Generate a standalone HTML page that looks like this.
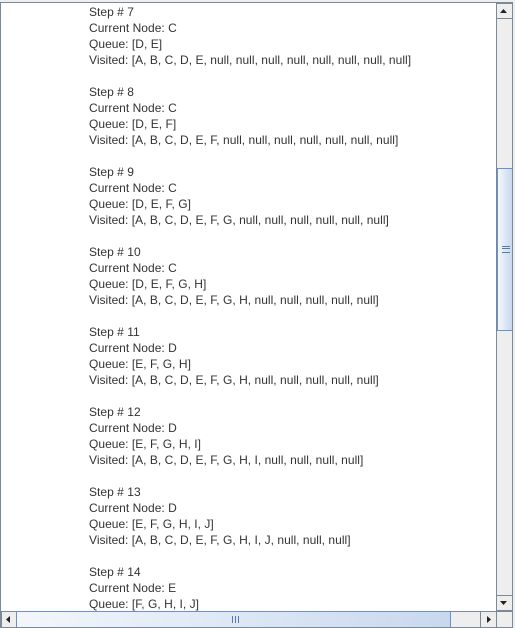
<html><head><style>
body{margin:0;width:515px;height:628px;background:#eeeeee;position:relative;overflow:hidden;font-family:"Liberation Sans",sans-serif}
#box{position:absolute;left:0;top:2px;width:511px;height:624px;border:1px solid #7a8a99;background:#fff;overflow:hidden}
#txt{position:absolute;left:88px;top:1px;font-size:12px;line-height:16px;color:#333;white-space:pre;letter-spacing:0.03px}
.vs{position:absolute;left:495px;top:0;width:16px;height:608px;background:#eeeeee;border-left:1px solid #7a8a99}
.hs{position:absolute;left:0;top:608px;width:495px;height:16px;background:#eeeeee;border-top:1px solid #7a8a99}
.btn{position:absolute;background:#eeeeee;border:1px solid #7a8a99;box-sizing:border-box}
.thumb{position:absolute;background:linear-gradient(90deg,#f3f7fc,#c8d8ee);border:1px solid #6d8fce;box-sizing:border-box}
.corner{position:absolute;left:495px;top:608px;width:16px;height:16px;background:#eeeeee;border-left:1px solid #7a8a99;border-top:1px solid #7a8a99}
</style></head><body>
<div id="box">
<div id="txt">Step # 7
Current Node: C
Queue: [D, E]
Visited: [A, B, C, D, E, null, null, null, null, null, null, null, null]

Step # 8
Current Node: C
Queue: [D, E, F]
Visited: [A, B, C, D, E, F, null, null, null, null, null, null, null]

Step # 9
Current Node: C
Queue: [D, E, F, G]
Visited: [A, B, C, D, E, F, G, null, null, null, null, null, null]

Step # 10
Current Node: C
Queue: [D, E, F, G, H]
Visited: [A, B, C, D, E, F, G, H, null, null, null, null, null]

Step # 11
Current Node: D
Queue: [E, F, G, H]
Visited: [A, B, C, D, E, F, G, H, null, null, null, null, null]

Step # 12
Current Node: D
Queue: [E, F, G, H, I]
Visited: [A, B, C, D, E, F, G, H, I, null, null, null, null]

Step # 13
Current Node: D
Queue: [E, F, G, H, I, J]
Visited: [A, B, C, D, E, F, G, H, I, J, null, null, null]

Step # 14
Current Node: E
Queue: [F, G, H, I, J]
</div>
<div class="vs">
 <div class="btn" style="left:-1px;top:0;width:17px;height:16px"><svg width="15" height="14" style="position:absolute;left:0;top:0"><path d="M3 9h7L6.5 5z" fill="#222"/></svg></div>
 <div class="thumb" style="left:0;top:165px;width:16px;height:163px"><div style="position:absolute;left:4px;top:77px;width:8px;height:5px;border-top:1px solid #5a78b0;border-bottom:1px solid #5a78b0"><div style="margin-top:1px;border-top:1px solid #5a78b0"></div></div></div>
 <div class="btn" style="left:-1px;top:592px;width:17px;height:16px"><svg width="15" height="14" style="position:absolute;left:0;top:0"><path d="M3 5h7L6.5 9z" fill="#222"/></svg></div>
</div>
<div class="hs">
 <div class="btn" style="left:0;top:-1px;width:16px;height:17px"><svg width="14" height="15" style="position:absolute;left:0;top:0"><path d="M8 4v7L4 7.5z" fill="#222"/></svg></div>
 <div class="thumb" style="left:15px;top:-1px;width:435px;height:17px"><div style="position:absolute;left:215px;top:4px;width:5px;height:7px;border-left:1px solid #5a78b0;border-right:1px solid #5a78b0"><div style="margin-left:1px;width:1px;height:7px;border-right:1px solid #5a78b0"></div></div></div>
 <div class="btn" style="left:479px;top:-1px;width:17px;height:17px"><svg width="15" height="15" style="position:absolute;left:0;top:0"><path d="M6 4v7l4-3.5z" fill="#222"/></svg></div>
</div>
<div class="corner"></div>
</div>
</body></html>
